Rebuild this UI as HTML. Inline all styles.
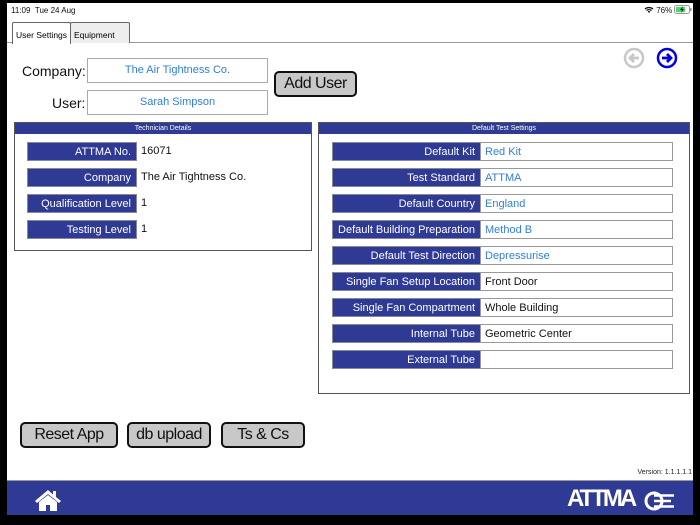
<!DOCTYPE html>
<html><head><meta charset="utf-8">
<style>
*{box-sizing:border-box;margin:0;padding:0}
body{width:700px;height:525px;background:#000;position:relative;overflow:hidden;font-family:"Liberation Sans",sans-serif}
#scr{position:absolute;left:7px;top:3px;width:686px;height:512px;background:#fff;overflow:hidden}
.a{position:absolute}
.tab{position:absolute;top:19px;height:21px;border:1px solid #666;border-bottom:none;font-size:8.5px;padding:7px 0 0 3px;background:#eee;border-radius:2px 2px 0 0;white-space:nowrap;overflow:hidden}
.inp{position:absolute;border:1px solid #aaa;background:#fff;color:#2f7fd8;font-size:11px;text-align:center;line-height:23px}
.btn{position:absolute;border:2.5px solid #111;border-radius:5px;background:#c8c8c8;font-size:16px;text-align:center;color:#111;white-space:nowrap;letter-spacing:-0.5px}
.panel{position:absolute;border:1px solid #555;background:#fff}
.ph{background:#2e3a94;color:#fff;font-size:7px;text-align:center;height:11px;line-height:11px}
.lab{position:absolute;background:#2e3a94;color:#fff;font-size:11px;text-align:right;padding-right:5px;height:19px;line-height:19px;border:1px solid #889;white-space:nowrap}
.val{position:absolute;font-size:11px;height:19px;line-height:19px;padding-left:4px;color:#111;white-space:nowrap}
.box{border:1px solid #999;background:#fff}
.blue{color:#2f7fd8}
</style></head><body>
<div id="scr">
<div class="a" style="left:4px;top:3px;font-size:8px;color:#111">11:09&nbsp;&nbsp;Tue 24 Aug</div>
<div class="a" style="left:637px;top:2px;font-size:8px;color:#111">
<svg width="10" height="8" viewBox="0 0 10 8" style="vertical-align:-1px"><path d="M1 3a6 6 0 0 1 8 0M2.5 4.5a4 4 0 0 1 5 0M4 6a2 2 0 0 1 2 0" stroke="#111" stroke-width="1.3" fill="none"/></svg> 76%
<svg width="18" height="9" viewBox="0 0 18 9" style="vertical-align:-1px"><rect x="0.5" y="0.5" width="15" height="8" rx="2" fill="none" stroke="#999"/><rect x="2" y="2" width="9" height="5" fill="#4cd964"/><rect x="16" y="3" width="1.5" height="3" fill="#999"/><path d="M9 1L6 5h2l-1 3 3-4H8z" fill="#111"/></svg></div>
<div class="a" style="left:0;top:39px;width:686px;height:1px;background:#999"></div>
<div class="tab" style="left:63px;width:60px">Equipment</div>
<div class="tab" style="left:5px;width:59px;background:#fff;height:22px;z-index:2">User Settings</div>

<div class="a" style="left:15px;top:60px;font-size:14px;color:#111">Company:</div>
<div class="inp" style="left:80px;top:55px;width:181px;height:25px">The Air Tightness Co.</div>
<div class="a" style="left:45px;top:92px;font-size:14px;color:#111">User:</div>
<div class="inp" style="left:80px;top:87px;width:181px;height:25px">Sarah Simpson</div>
<div class="btn" style="left:267px;top:68px;width:83px;height:26px;line-height:21px">Add User</div>

<svg class="a" style="left:616px;top:44px" width="22" height="22" viewBox="0 0 22 22"><circle cx="11" cy="11" r="9" fill="none" stroke="#c8c8c8" stroke-width="2.5"/><path d="M16 11H8M11 7l-4 4 4 4" stroke="#c8c8c8" stroke-width="2.8" fill="none"/></svg>
<svg class="a" style="left:649px;top:44px" width="22" height="22" viewBox="0 0 22 22"><circle cx="11" cy="11" r="9" fill="none" stroke="#0000dd" stroke-width="2.5"/><path d="M6 11h8M11 7l4 4-4 4" stroke="#0000dd" stroke-width="2.8" fill="none"/></svg>

<div class="panel" style="left:7px;top:119px;width:298px;height:129px"><div class="ph">Technician Details</div></div>
<div class="lab" style="left:20px;top:139px;width:110px">ATTMA No.</div><div class="val" style="left:130px;top:139px">16071</div>
<div class="lab" style="left:20px;top:165px;width:110px">Company</div><div class="val" style="left:130px;top:165px">The Air Tightness Co.</div>
<div class="lab" style="left:20px;top:191px;width:110px">Qualification Level</div><div class="val" style="left:130px;top:191px">1</div>
<div class="lab" style="left:20px;top:217px;width:110px">Testing Level</div><div class="val" style="left:130px;top:217px">1</div>

<div class="panel" style="left:311px;top:119px;width:372px;height:272px"><div class="ph">Default Test Settings</div></div>
<div class="lab" style="left:325px;top:139px;width:149px">Default Kit</div><div class="val box blue" style="left:473px;top:139px;width:193px">Red Kit</div>
<div class="lab" style="left:325px;top:165px;width:149px">Test Standard</div><div class="val box blue" style="left:473px;top:165px;width:193px">ATTMA</div>
<div class="lab" style="left:325px;top:191px;width:149px">Default Country</div><div class="val box blue" style="left:473px;top:191px;width:193px">England</div>
<div class="lab" style="left:325px;top:217px;width:149px">Default Building Preparation</div><div class="val box blue" style="left:473px;top:217px;width:193px">Method B</div>
<div class="lab" style="left:325px;top:243px;width:149px">Default Test Direction</div><div class="val box blue" style="left:473px;top:243px;width:193px">Depressurise</div>
<div class="lab" style="left:325px;top:269px;width:149px">Single Fan Setup Location</div><div class="val box" style="left:473px;top:269px;width:193px">Front Door</div>
<div class="lab" style="left:325px;top:295px;width:149px">Single Fan Compartment</div><div class="val box" style="left:473px;top:295px;width:193px">Whole Building</div>
<div class="lab" style="left:325px;top:321px;width:149px">Internal Tube</div><div class="val box" style="left:473px;top:321px;width:193px">Geometric Center</div>
<div class="lab" style="left:325px;top:347px;width:149px">External Tube</div><div class="val box" style="left:473px;top:347px;width:193px"></div>

<div class="btn" style="left:13px;top:419px;width:98px;height:26px;line-height:21px">Reset App</div>
<div class="btn" style="left:120px;top:419px;width:84px;height:26px;line-height:21px">db upload</div>
<div class="btn" style="left:214px;top:419px;width:84px;height:26px;line-height:21px">Ts &amp; Cs</div>

<div class="a" style="right:1px;top:466px;font-size:7px;color:#222">Version: 1.1.1.1.1</div>
<div class="a" style="left:0;top:477px;width:686px;height:35px;background:#2e3a94;border-top:1px solid #999"></div>
<svg class="a" style="left:26px;top:485px" width="30" height="24" viewBox="0 0 30 24"><path d="M15 2L2 13l2 2 11-9 11 9 2-2-5-4V3h-3v3.5z" fill="#fff"/><path d="M6 14v9h7v-6h4v6h7v-9L15 7z" fill="#fff"/></svg>
<div class="a" style="left:560px;top:482px;font-size:24px;font-weight:bold;color:#fff;letter-spacing:-3px">ATTMA</div>
<svg class="a" style="left:637px;top:487px" width="36" height="22" viewBox="0 0 36 22"><circle cx="10" cy="11" r="8" fill="none" stroke="#fff" stroke-width="3"/><path d="M10 5.5h20M10 11h17M10 16.5h20" stroke="#fff" stroke-width="2.6"/></svg>
</div>
</body></html>
